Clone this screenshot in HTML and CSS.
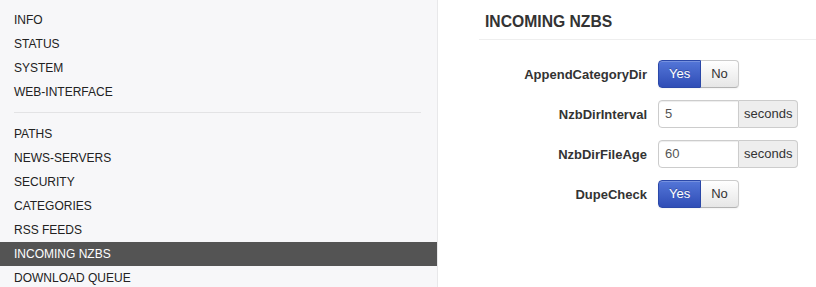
FILE: index.html
```html
<!DOCTYPE html>
<html>
    <head>
        <title>NZBGet Settings</title>
        <meta name="viewport" content="width=device-width, initial-scale=1" />
        <meta charset="utf-8" />
        <link rel="stylesheet" href="styles.css">
    </head>
    <body>
        <div class="page">
            <ul class="navList">
                <li><a>INFO</a></li>
                <li><a>STATUS</a></li>
                <li><a>SYSTEM</a></li>
                <li><a>WEB-INTERFACE</a></li>
                <li class="divider"></li>
                <li><a>PATHS</a></li>
                <li><a>NEWS-SERVERS</a></li>
                <li><a>SECURITY</a></li>
                <li><a>CATEGORIES</a></li>
                <li><a>RSS FEEDS</a></li>
                <li class="active"><a>INCOMING NZBS</a></li>
                <li><a>DOWNLOAD QUEUE</a></li>
            </ul>

            <div class="content">
                <h3 class="sectionTitle">INCOMING NZBS</h3>
                <form class="settings">
                    <label class="controlLabel">AppendCategoryDir</label>
                    <div class="btnGroup">
                        <button type="button" class="btn btnPrimary">Yes</button>
                        <button type="button" class="btn">No</button>
                    </div>

                    <label class="controlLabel">NzbDirInterval</label>
                    <div class="inputAppend">
                        <input type="text" value="5">
                        <span class="addOn">seconds</span>
                    </div>

                    <label class="controlLabel">NzbDirFileAge</label>
                    <div class="inputAppend">
                        <input type="text" value="60">
                        <span class="addOn">seconds</span>
                    </div>

                    <label class="controlLabel">DupeCheck</label>
                    <div class="btnGroup">
                        <button type="button" class="btn btnPrimary">Yes</button>
                        <button type="button" class="btn">No</button>
                    </div>
                </form>
            </div>
        </div>
    </body>
</html>
```

FILE: styles.css
```css
html {
    font-family: "Liberation Sans", Arial, sans-serif;
}
body {
    margin: 0;
    color: #333;
    background: #fff;
}
.page {
    display: flex;
    height: 287px;
    overflow: hidden;
}

.navList {
    list-style: none;
    margin: 0;
    padding: 8px 0 0 0;
    width: 437px;
    flex-shrink: 0;
    background: #f7f7f9;
    border-right: 1px solid #e8e8ea;
    font-size: 12px;
}
.navList a {
    display: block;
    height: 24px;
    line-height: 24px;
    padding-left: 14px;
    color: #222;
}
.navList .divider {
    height: 1px;
    margin: 8px 16px 9px 14px;
    background: #e3e3e5;
}
.navList .active a {
    background: #545454;
    color: #fff;
}

.content {
    flex: 1;
    padding-left: 41px;
}
.sectionTitle {
    margin: 0;
    padding: 12px 6px 7px;
    line-height: 20px;
    font-size: 15.7px;
    font-weight: bold;
    color: #333;
    border-bottom: 1px solid #eee;
}

.settings {
    display: grid;
    grid-template-columns: 168px auto;
    column-gap: 11px;
    row-gap: 12px;
    align-items: center;
    justify-items: start;
    margin-top: 20px;
}
.controlLabel {
    justify-self: end;
    font-size: 13px;
    font-weight: bold;
    color: #333;
}

.btnGroup {
    display: flex;
}
.btn {
    font-family: inherit;
    font-size: 13px;
    line-height: 18px;
    padding: 4px 10px;
    margin: 0;
    color: #333;
    background: linear-gradient(#fff, #e6e6e6);
    border: 1px solid #ccc;
    border-bottom-color: #b3b3b3;
    box-shadow: inset 0 1px 0 rgba(255, 255, 255, .2), 0 1px 2px rgba(0, 0, 0, .05);
}
.btnGroup .btn:first-child {
    border-radius: 4px 0 0 4px;
}
.btnGroup .btn:last-child {
    border-radius: 0 4px 4px 0;
    border-left: 0;
}
.btnPrimary {
    color: #fff;
    background: linear-gradient(#5476d8, #2f4db6);
    border-color: #2b48a9;
    text-shadow: 0 -1px 0 rgba(0, 0, 0, .25);
}

.inputAppend {
    display: flex;
}
.inputAppend input {
    font-family: inherit;
    font-size: 13px;
    width: 67px;
    height: 18px;
    line-height: 18px;
    padding: 4px 6px;
    margin: 0;
    color: #555;
    border: 1px solid #ccc;
    border-radius: 4px 0 0 4px;
    box-shadow: inset 0 1px 1px rgba(0, 0, 0, .075);
    outline: none;
}
.addOn {
    font-size: 13px;
    line-height: 18px;
    padding: 4px 5px;
    background: #eee;
    border: 1px solid #ccc;
    border-left: 0;
    border-radius: 0 4px 4px 0;
    color: #333;
}
```
